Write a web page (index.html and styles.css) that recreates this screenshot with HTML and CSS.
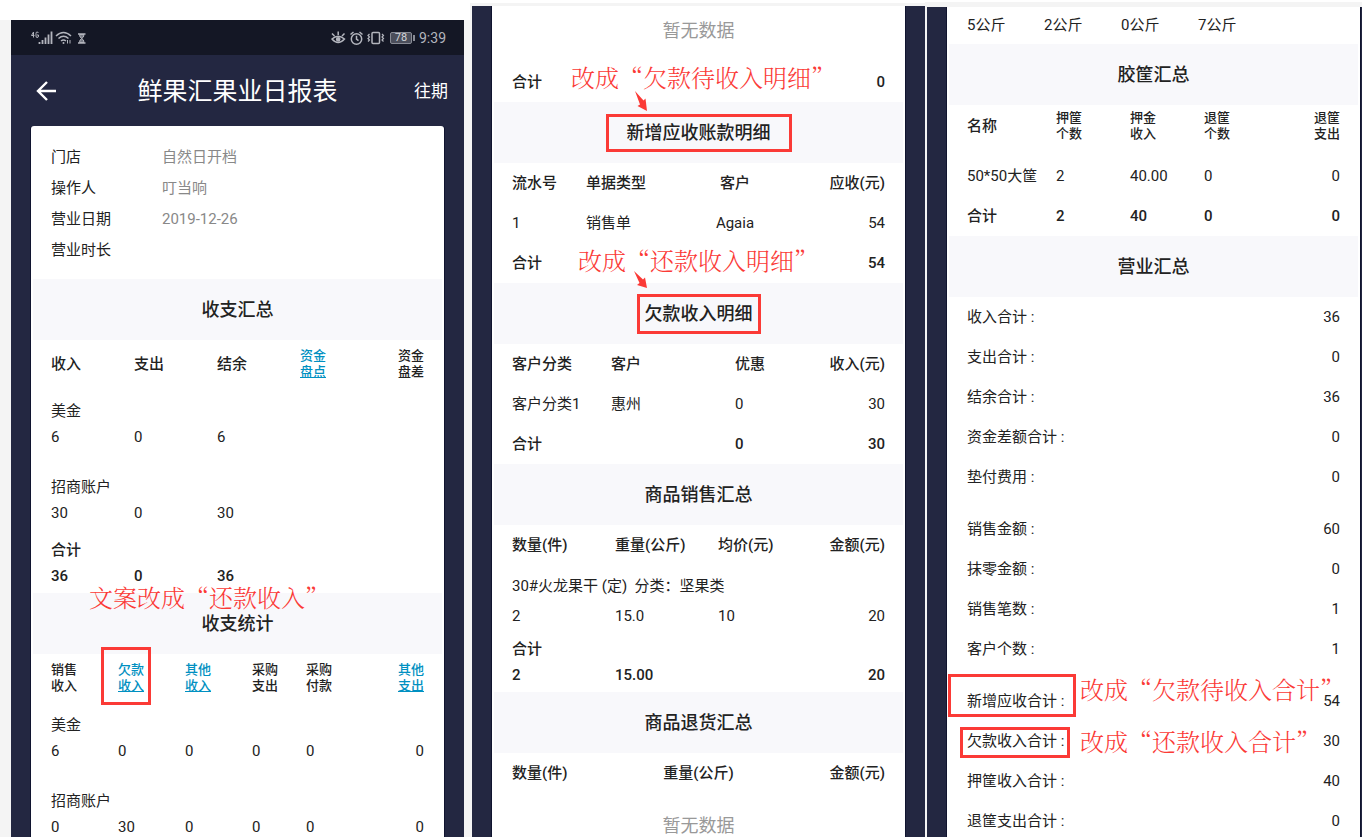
FILE: index.html
```html
<!DOCTYPE html>
<html lang="zh-CN">
  <head>
    <meta charset="UTF-8" />
    <meta name="viewport" content="width=device-width, initial-scale=1" />
    <title>鲜果汇果业日报表</title>
    <link rel="stylesheet" href="styles.css" />
  </head>
  <body>
    <main class="board">
      <!-- Screen 1: income summary -->
      <section class="shot shot-first">
        <div class="screen">
          <div class="status-bar">
            <div class="status-group">
              <svg width="56" height="16" viewBox="0 0 56 16" fill="none" stroke="#b3b5bd">
                <path d="M2.5 2 L0.5 5.5 H3.5 M2.5 2 V7.5 M7.5 3 Q7 2 6 2 Q5 2 5 3.5 V6 Q5 7.5 6 7.5 Q7.5 7.5 7.5 6 V5 H6" />
                <path d="M8.500 12v2M11.500 10v4M14.500 7.500v6.500M17.500 4.500v9.500M20.500 1.500v12.500" stroke-width="1.800" />
                <path d="M25 6Q32.500 -1 40 6M27.500 8.500Q32.500 4 37.500 8.500M30 11Q32.500 9 35 11" stroke-width="1.500" />
                <circle cx="32.500" cy="13" r="1" fill="#b3b5bd" stroke="none" />
                <path d="M36.500 10v3.500M39 10v3.500" />
                <path d="M47 4h7.500M47 13h7.500" stroke-width="1.500" />
                <path d="M48.500 4.500q0 3 2.300 4q-2.300 1-2.300 4h4.500q0-3-2.300-4q2.300-1 2.300-4z" fill="#777a85" />
              </svg>
            </div>
            <div class="status-group">
              <svg width="54" height="16" viewBox="0 0 54 16" fill="none" stroke="#b3b5bd" stroke-width="1.500">
                <path d="M1 9Q7 3.500 13.500 9Q7 16 1 9zM7.200 5V1.500M3.500 6L1 3.500M11 6L13.500 3.500" />
                <circle cx="7.200" cy="9.300" r="1.600" fill="#b3b5bd" />
                <circle cx="25.500" cy="9" r="5.200" />
                <path d="M25.500 5.800V9.200l2 1.500M19.500 4.500L22.500 2M28.500 2L31.500 4.500" />
                <rect x="41" y="2.500" width="7.500" height="11" rx="1" />
                <path d="M38.500 4l-1.500 1.500 1.500 1.500-1.500 1.500 1.500 1.500-1.500 1.500M51 4l1.500 1.500-1.500 1.500 1.500 1.500-1.500 1.500 1.500 1.500" stroke-width="1.200" />
              </svg>
              <span class="battery">78</span>
              <span class="clock">9:39</span>
            </div>
          </div>

          <header class="app-bar">
            <button class="back" type="button" aria-label="返回">
              <svg width="22" height="20" viewBox="0 0 22 20" fill="none" stroke="#fff" stroke-width="2.400">
                <path d="M21 10H2.500M12 1L3 10L12 19" />
              </svg>
            </button>
            <h1>鲜果汇果业日报表</h1>
            <a class="history" href="#">往期</a>
          </header>

          <div class="card card-top">
            <dl class="info">
              <div><dt>门店</dt><dd>自然日开档</dd></div>
              <div><dt>操作人</dt><dd>叮当响</dd></div>
              <div><dt>营业日期</dt><dd>2019-12-26</dd></div>
              <div><dt>营业时长</dt><dd></dd></div>
            </dl>

            <h2>收支汇总</h2>
            <table class="grouped">
              <colgroup><col class="c83" /><col class="c83" /><col class="c83" /><col class="c83" /><col /></colgroup>
              <thead>
                <tr>
                  <th>收入</th>
                  <th>支出</th>
                  <th>结余</th>
                  <th class="small"><a href="#">资金<br /><u>盘点</u></a></th>
                  <th class="small">资金<br />盘差</th>
                </tr>
              </thead>
              <tbody>
                <tr class="name"><td colspan="5">美金</td></tr>
                <tr class="nums"><td>6</td><td>0</td><td>6</td><td></td><td></td></tr>
                <tr class="name"><td colspan="5">招商账户</td></tr>
                <tr><td>30</td><td>0</td><td>30</td><td></td><td></td></tr>
              </tbody>
              <tfoot>
                <tr class="name"><td colspan="5">合计</td></tr>
                <tr class="sum"><td>36</td><td>0</td><td>36</td><td></td><td></td></tr>
              </tfoot>
            </table>

            <h2>收支统计<span class="note note-copy">文案改成“还款收入”</span></h2>
            <table class="grouped">
              <colgroup><col class="c67" /><col class="c67" /><col class="c67" /><col class="c54" /><col class="c54" /><col /></colgroup>
              <thead>
                <tr>
                  <th class="small">销售<br />收入</th>
                  <th class="small"><a href="#">欠款<br /><u>收入</u></a><span class="mark mark-column"></span></th>
                  <th class="small"><a href="#">其他<br /><u>收入</u></a></th>
                  <th class="small">采购<br />支出</th>
                  <th class="small">采购<br />付款</th>
                  <th class="small"><a href="#">其他<br /><u>支出</u></a></th>
                </tr>
              </thead>
              <tbody>
                <tr class="name"><td colspan="6">美金</td></tr>
                <tr class="nums"><td>6</td><td>0</td><td>0</td><td>0</td><td>0</td><td>0</td></tr>
                <tr class="name"><td colspan="6">招商账户</td></tr>
                <tr class="nums"><td>0</td><td>30</td><td>0</td><td>0</td><td>0</td><td>0</td></tr>
              </tbody>
            </table>
          </div>
        </div>
      </section>

      <!-- Screen 2: receivables and sales -->
      <section class="shot shot-second">
        <div class="screen">
          <div class="card">
            <p class="empty">暂无数据</p>
            <table>
              <tfoot>
                <tr><td>合计</td><td>0</td></tr>
              </tfoot>
            </table>

            <h2>
              <span class="boxed boxed-wide">新增应收账款明细</span>
              <span class="note note-pending">改成“欠款待收入明细”</span>
              <svg class="arrow" width="16" height="22" viewBox="0 0 16 22" fill="#fb3a36">
                <path d="M2 1L10.500 10.500L12.500 8.500L14 21L4.500 16L7 14.500z" />
              </svg>
            </h2>
            <table>
              <colgroup><col class="c74" /><col class="c112" /><col class="c74" /><col /></colgroup>
              <thead>
                <tr><th>流水号</th><th>单据类型</th><th class="center">客户</th><th>应收(元)</th></tr>
              </thead>
              <tbody>
                <tr><td>1</td><td>销售单</td><td class="center">Agaia</td><td>54</td></tr>
              </tbody>
              <tfoot>
                <tr><td>合计</td><td></td><td></td><td>54</td></tr>
              </tfoot>
            </table>

            <h2>
              <span class="boxed">欠款收入明细</span>
              <span class="note note-repaid">改成“还款收入明细”</span>
              <svg class="arrow" width="16" height="22" viewBox="0 0 16 22" fill="#fb3a36">
                <path d="M1 0L10 8.500L12 6.500L14 17L4 14L6.500 12z" />
              </svg>
            </h2>
            <table>
              <colgroup><col class="c99" /><col class="c124" /><col class="c54" /><col /></colgroup>
              <thead>
                <tr><th>客户分类</th><th>客户</th><th>优惠</th><th>收入(元)</th></tr>
              </thead>
              <tbody>
                <tr><td>客户分类1</td><td>惠州</td><td>0</td><td>30</td></tr>
              </tbody>
              <tfoot>
                <tr><td>合计</td><td></td><td>0</td><td>30</td></tr>
              </tfoot>
            </table>

            <h2>商品销售汇总</h2>
            <table class="goods">
              <colgroup><col class="c103" /><col class="c103" /><col class="c103" /><col /></colgroup>
              <thead>
                <tr><th>数量(件)</th><th>重量(公斤)</th><th>均价(元)</th><th>金额(元)</th></tr>
              </thead>
              <tbody>
                <tr><td class="product" colspan="4">30#火龙果干 (定)&nbsp; 分类：坚果类</td></tr>
                <tr class="detail"><td>2</td><td>15.0</td><td>10</td><td>20</td></tr>
              </tbody>
              <tfoot>
                <tr class="name"><td colspan="4">合计</td></tr>
                <tr class="sum"><td>2</td><td>15.00</td><td></td><td>20</td></tr>
              </tfoot>
            </table>

            <h2>商品退货汇总</h2>
            <table>
              <thead>
                <tr><th>数量(件)</th><th class="center">重量(公斤)</th><th>金额(元)</th></tr>
              </thead>
            </table>
            <p class="empty empty-last">暂无数据</p>
          </div>
        </div>
      </section>

      <!-- Screen 3: baskets and business summary -->
      <section class="shot shot-third">
        <div class="screen">
          <div class="card">
            <table class="weights">
              <colgroup><col class="c77" /><col class="c77" /><col class="c77" /><col /></colgroup>
              <tbody>
                <tr><td>5公斤</td><td>2公斤</td><td>0公斤</td><td>7公斤</td></tr>
              </tbody>
            </table>

            <h2>胶筐汇总</h2>
            <table class="baskets">
              <colgroup><col class="c89" /><col class="c74" /><col class="c74" /><col class="c74" /><col /></colgroup>
              <thead>
                <tr>
                  <th>名称</th>
                  <th class="small">押筐<br />个数</th>
                  <th class="small">押金<br />收入</th>
                  <th class="small">退筐<br />个数</th>
                  <th class="small">退筐<br />支出</th>
                </tr>
              </thead>
              <tbody>
                <tr><td>50*50大筐</td><td>2</td><td>40.00</td><td>0</td><td>0</td></tr>
              </tbody>
              <tfoot>
                <tr><td>合计</td><td>2</td><td>40</td><td>0</td><td>0</td></tr>
              </tfoot>
            </table>

            <h2>营业汇总</h2>
            <dl class="totals">
              <div><dt>收入合计 :</dt><dd>36</dd></div>
              <div><dt>支出合计 :</dt><dd>0</dd></div>
              <div><dt>结余合计 :</dt><dd>36</dd></div>
              <div><dt>资金差额合计 :</dt><dd>0</dd></div>
              <div><dt>垫付费用 :</dt><dd>0</dd></div>
            </dl>
            <dl class="totals">
              <div><dt>销售金额 :</dt><dd>60</dd></div>
              <div><dt>抹零金额 :</dt><dd>0</dd></div>
              <div><dt>销售笔数 :</dt><dd>1</dd></div>
              <div><dt>客户个数 :</dt><dd>1</dd></div>
            </dl>
            <dl class="totals">
              <div>
                <dt>新增应收合计 :<span class="mark mark-new"></span><span class="note note-new">改成“欠款待收入合计”</span></dt>
                <dd>54</dd>
              </div>
              <div>
                <dt>欠款收入合计 :<span class="mark mark-debt"></span><span class="note note-debt">改成“还款收入合计”</span></dt>
                <dd>30</dd>
              </div>
              <div><dt>押筐收入合计 :</dt><dd>40</dd></div>
              <div><dt>退筐支出合计 :</dt><dd>0</dd></div>
            </dl>
          </div>
        </div>
      </section>
    </main>
  </body>
</html>
```
FILE: styles.css
```css
* {
  box-sizing: border-box;
}

body {
  margin: 0;
  background: #fff;
  color: #222;
  font-family: Roboto, "Noto Sans CJK SC", sans-serif;
  font-size: 15px;
  line-height: 26px;
}

h1,
h2,
p,
dl,
dd {
  margin: 0;
}

/* three phone screens side by side, cut off at the window's bottom */
.board {
  display: grid;
  grid-template-columns: 470fr 455fr 437fr;
  height: 100vh;
  overflow: hidden;
}

.shot {
  display: flex;
  background: #f4f4f4;
}

.shot-first {
  margin-top: 20px;
  padding: 0 6px 0 11px;
}

.shot-second {
  margin-top: 3px;
  padding: 3px 0 0 2px;
}

.shot-third {
  margin-top: 2px;
  padding-top: 5px;
  border-left: 2px solid #f4f4f4;
}

.screen {
  display: flex;
  flex-direction: column;
  flex: 1;
  background: #232741;
}

/* status bar */
.status-bar {
  display: flex;
  justify-content: space-between;
  align-items: center;
  height: 35px;
  padding: 0 18px 0 20px;
  background: #141725;
  color: #b3b5bd;
}

.status-group {
  display: flex;
  align-items: center;
  gap: 5px;
}

.battery {
  position: relative;
  width: 22px;
  height: 12px;
  margin-right: 2px;
  border: 1px solid #888b95;
  border-radius: 2px;
  background: #4b4e5b;
  color: #d4d5da;
  font-size: 11px;
  line-height: 10px;
  text-align: center;
}

.battery::after {
  content: "";
  position: absolute;
  top: 2px;
  right: -4px;
  width: 2px;
  height: 6px;
  background: #888b95;
}

.clock {
  font-size: 14px;
}

/* app bar */
.app-bar {
  display: grid;
  grid-template-columns: 1fr auto 1fr;
  align-items: center;
  height: 71px;
  padding: 0 16px;
  color: #fff;
}

.back {
  display: flex;
  justify-self: start;
  padding: 0 8px;
  border: 0;
  background: none;
  cursor: pointer;
}

h1 {
  padding-top: 3px;
  font-size: 25px;
  font-weight: 400;
  line-height: 36px;
}

.history {
  justify-self: end;
  color: #fff;
  font-size: 17px;
  text-decoration: none;
}

/* card */
.card {
  flex: 1;
  margin: 0 20px;
  background: #fff;
  box-shadow: -1px 0 #10142f, 1px 0 #10142f;
}

.card-top {
  border-radius: 3px 3px 0 0;
}

.shot-third .card {
  margin-right: 2px;
}

h2 {
  position: relative;
  display: flex;
  justify-content: center;
  align-items: center;
  height: 61px;
  margin: 0 2px;
  padding-top: 1px;
  background: #f8f8fb;
  font-size: 18px;
  font-weight: 500;
}

.info {
  padding: 16px 20px 13px;
}

.info div {
  display: flex;
  height: 31px;
  line-height: 31px;
}

.info dt {
  width: 111px;
}

.info dd {
  color: #888;
}

.empty {
  padding-top: 12px;
  color: #999;
  font-size: 18px;
  text-align: center;
  height: 56px;
}

.empty-last {
  padding-top: 20px;
}

/* tables */
table {
  width: calc(100% - 40px);
  margin: 0 20px;
  border-collapse: collapse;
  table-layout: fixed;
}

th,
td {
  height: 40px;
  padding: 0;
  text-align: left;
  white-space: nowrap;
}

th,
tfoot td {
  font-weight: 500;
}

th {
  position: relative;
}

th:last-child,
tr:not(.name) td:last-child:not([colspan]) {
  text-align: right;
}

th.center,
td.center {
  text-align: center;
}

.small {
  font-size: 13px;
  line-height: 16px;
}

.small a {
  color: #0090c1;
  text-decoration: none;
}

.grouped th {
  height: 47px;
}

.grouped td,
.goods tfoot td {
  height: 26px;
}

.grouped .name td {
  height: 37px;
  padding-top: 11px;
}

.goods .name td {
  height: 35px;
  padding-top: 9px;
}

.grouped .nums td {
  height: 39px;
  padding-bottom: 13px;
}

.grouped .sum td,
.goods .sum td {
  height: 30px;
  padding-bottom: 4px;
}

.goods .product {
  height: 41px;
}

.goods .detail td {
  height: 21px;
  line-height: 21px;
}

.weights td {
  height: 37px;
  padding-bottom: 2px;
}

.weights tr td:last-child:not([colspan]) {
  text-align: left;
}

.baskets th {
  height: 51px;
  padding-bottom: 10px;
}

.c54 { width: 54px; }
.c67 { width: 67px; }
.c74 { width: 74px; }
.c77 { width: 77px; }
.c83 { width: 83px; }
.c89 { width: 89px; }
.c99 { width: 99px; }
.c103 { width: 103px; }
.c112 { width: 112px; }
.c124 { width: 124px; }

/* totals list */
.totals {
  padding: 0 20px 12px;
}

.totals div {
  position: relative;
  display: flex;
  justify-content: space-between;
  height: 40px;
  line-height: 41px;
}

/* red review marks laid over the screens */
.boxed {
  padding: 4px 5px;
  border: 3px solid #fb3a36;
}

.boxed-wide {
  padding: 3px 18px;
}

.mark {
  position: absolute;
  border: 3px solid #fb3a36;
}

.mark-column {
  top: -7px;
  left: -17px;
  width: 50px;
  height: 58px;
}

.mark-new {
  top: -7px;
  left: -19px;
  width: 128px;
  height: 43px;
}

.mark-debt {
  top: 6px;
  left: -7px;
  width: 110px;
  height: 31px;
}

.note {
  position: absolute;
  color: #fb3a36;
  font-family: SimSun, "Noto Serif CJK SC", "Noto Sans CJK SC", serif;
  font-size: 24px;
  font-weight: 300;
  line-height: 30px;
  white-space: nowrap;
}

.note-copy {
  top: -11px;
  left: 56px;
}

.note-pending {
  top: -40px;
  left: 77px;
}

.note-repaid {
  top: -38px;
  left: 84px;
}

.note-new {
  top: -7px;
  left: 113px;
}

.note-debt {
  top: 5px;
  left: 113px;
}

.arrow {
  position: absolute;
  top: -12px;
  left: 139px;
}
```
